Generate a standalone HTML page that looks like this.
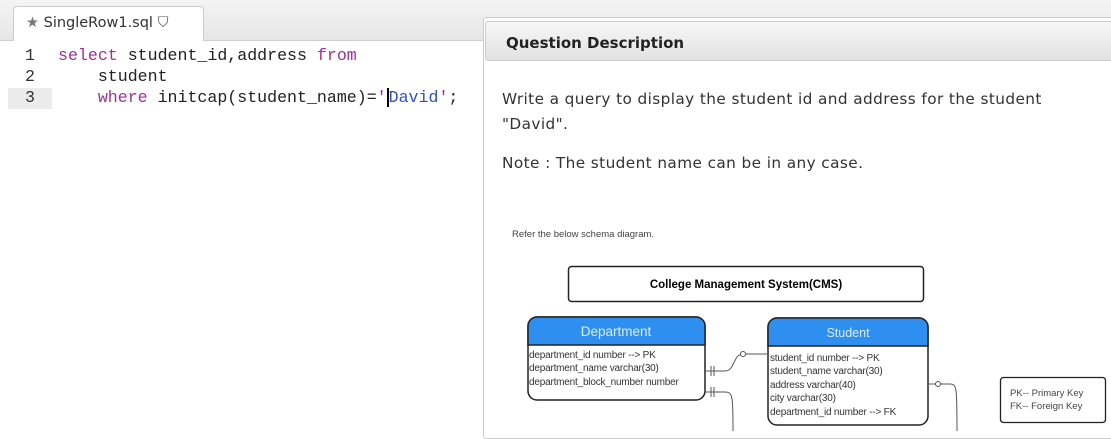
<!DOCTYPE html>
<html><head><style>
body{margin:0;width:1111px;height:431px;overflow:hidden;background:#fff;position:relative;font-family:"DejaVu Sans",Verdana,sans-serif}
.top{position:absolute;left:0;top:0;width:1111px;height:40px;background:linear-gradient(#f4f4f4,#e6e6e6);border-bottom:1px solid #d0d0d0}
.tab{position:absolute;left:13px;top:6px;width:191px;height:35px;background:#fff;border:1px solid #ccc;border-bottom:none;border-radius:4px 4px 0 0;font:14.5px "DejaVu Sans",sans-serif;color:#333;line-height:32px;padding-left:12px;box-sizing:border-box}
.code{position:absolute;left:0;top:45px;font:16.6px/21px "Liberation Mono",monospace;color:#222}
.ln{position:absolute;left:8px;width:44px;text-align:center;color:#333}
.k{color:#a0309a}.s{color:#3050c0}
.panel{position:absolute;left:483px;top:17px;width:640px;height:420px;border:1px solid #ccc;border-radius:3px;background:#fff}
.hd{position:absolute;left:1px;top:3px;width:640px;height:40px;background:linear-gradient(#f7f7f7,#e2e2e2);border:1px solid #ccc;border-radius:3px;font-weight:bold;font-size:15px;line-height:42px;padding-left:20px;box-sizing:border-box;color:#222}
.p{position:absolute;left:502px;font-size:15.3px;letter-spacing:0.4px;color:#333}
</style></head><body>
<div class="top"></div>
<div class="tab"><span style="color:#777">★</span> SingleRow1.sql <span style="color:#555">⛉</span></div>
<div style="position:absolute;left:8px;top:88px;width:44px;height:21px;background:#ebebeb"></div>
<div class="code">
<div class="ln" style="top:0">1</div><div class="ln" style="top:21px">2</div><div class="ln" style="top:42px">3</div>
<div style="position:absolute;left:58px;top:0;white-space:pre"><span class="k">select</span> student_id,address <span class="k">from</span></div>
<div style="position:absolute;left:58px;top:21px;white-space:pre">    student</div>
<div style="position:absolute;left:58px;top:42px;white-space:pre">    <span class="k">where</span> initcap(student_name)=<span class="k">'</span><span class="s" style="border-left:2px solid #000">David</span><span class="k">'</span>;</div>
</div>
<div class="panel"><div class="hd">Question Description</div></div>
<div class="p" style="top:90px">Write a query to display the student id and address for the student</div>
<div class="p" style="top:115px">"David".</div>
<div class="p" style="top:154px">Note : The student name can be in any case.</div>
<div style="position:absolute;left:512px;top:229px;font:9.5px 'Liberation Sans',sans-serif;color:#444">Refer the below schema diagram.</div>
<svg style="position:absolute;left:0;top:0" width="1111" height="431" font-family="Liberation Sans,sans-serif">
<rect x="568.5" y="266.5" width="355" height="35" rx="3" fill="#fff" stroke="#222" stroke-width="1.5"/>
<text x="746" y="288" text-anchor="middle" font-size="11.5" font-weight="bold">College Management System(CMS)</text>
<rect x="528" y="317" width="177" height="83" rx="9" fill="#fff" stroke="#222" stroke-width="1.5"/>
<path d="M528 345V326a9 9 0 0 1 9-9h159a9 9 0 0 1 9 9v19z" fill="#2f8ff0" stroke="#222" stroke-width="1.5"/>
<text x="616" y="336" text-anchor="middle" font-size="13.5" fill="#dbeeff">Department</text>
<g font-size="10" fill="#333" letter-spacing="-0.2"><text x="529" y="358">department_id number --&gt; PK</text><text x="529" y="371">department_name varchar(30)</text><text x="529" y="385">department_block_number number</text></g>
<rect x="768" y="318" width="160" height="107" rx="9" fill="#fff" stroke="#222" stroke-width="1.5"/>
<path d="M768 346V327a9 9 0 0 1 9-9h142a9 9 0 0 1 9 9v19z" fill="#2f8ff0" stroke="#222" stroke-width="1.5"/>
<text x="848" y="337" text-anchor="middle" font-size="12.5" fill="#dbeeff">Student</text>
<g font-size="10" fill="#333" letter-spacing="-0.2"><text x="770" y="361">student_id number --&gt; PK</text><text x="770" y="374">student_name varchar(30)</text><text x="770" y="388">address varchar(40)</text><text x="770" y="401">city varchar(30)</text><text x="770" y="415">department_id number --&gt; FK</text></g>
<g fill="none" stroke="#555"><path d="M705 371h20c10 0 8-17 18-17h25"/><path d="M705 392h20c8 0 8 5 8 40"/><path d="M928 384h22c7 0 7 4 7 50"/><circle cx="743" cy="354" r="2.5" fill="#fff"/><circle cx="938" cy="384" r="2.5" fill="#fff"/><path d="M711 366v10M714 366v10M711 387v10M714 387v10"/></g>
<rect x="1000.5" y="377.5" width="105" height="45" rx="3" fill="#fff" stroke="#222" stroke-width="1.3"/>
<text x="1010" y="396" font-size="9.5" fill="#444">PK--  Primary Key</text><text x="1010" y="409" font-size="9.5" fill="#444">FK-- Foreign Key</text>
</svg>
</body></html>
